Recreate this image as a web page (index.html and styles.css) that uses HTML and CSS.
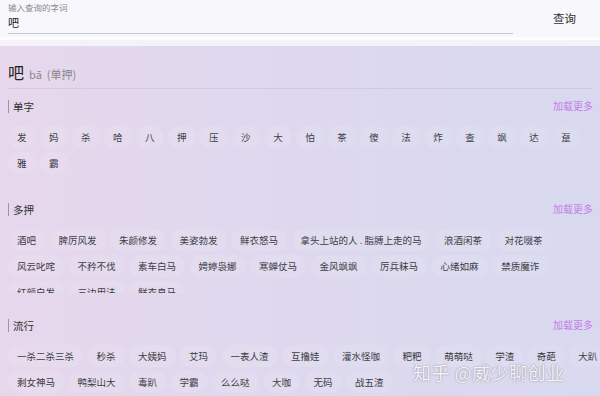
FILE: index.html
```html
<!DOCTYPE html>
<html lang="zh">
<head>
<meta charset="utf-8">
<title>押韵查询</title>
<link rel="stylesheet" href="styles.css">
</head>
<body>
<header class="top">
  <div class="field">
    <div class="field-label">输入查询的字词</div>
    <div class="field-value">吧</div>
  </div>
  <div class="search-btn">查询</div>
</header>
<main class="main">
  <div class="title">
    <span class="title-word">吧</span>
    <span class="title-pinyin">bā</span>
    <span class="title-type">(单押)</span>
  </div>

  <section class="section">
    <div class="section-head">
      <span class="section-name">单字</span>
      <span class="more">加载更多</span>
    </div>
    <div class="chips">
      <span class="chip">发</span><span class="chip">妈</span><span class="chip">杀</span><span class="chip">哈</span><span class="chip">八</span><span class="chip">押</span><span class="chip">压</span><span class="chip">沙</span><span class="chip">大</span><span class="chip">怕</span><span class="chip">茶</span><span class="chip">傻</span><span class="chip">法</span><span class="chip">炸</span><span class="chip">查</span><span class="chip">飒</span><span class="chip">达</span><span class="chip">趸</span><span class="chip">雅</span><span class="chip">霸</span>
    </div>
  </section>

  <section class="section section-clamped">
    <div class="section-head">
      <span class="section-name">多押</span>
      <span class="more">加载更多</span>
    </div>
    <div class="chips chips-clamp">
      <span class="chip">酒吧</span><span class="chip">脾厉风发</span><span class="chip">朱颜修发</span><span class="chip">美姿勃发</span><span class="chip">鲜衣怒马</span><span class="chip">拿头上站的人 . 脂膊上走的马</span><span class="chip">浪酒闲茶</span><span class="chip">对花啜茶</span><span class="chip">风云叱咤</span><span class="chip">不矜不伐</span><span class="chip">素车白马</span><span class="chip">娉婷袅娜</span><span class="chip">寒蝉仗马</span><span class="chip">金风飒飒</span><span class="chip">厉兵秣马</span><span class="chip">心绪如麻</span><span class="chip">禁质魔诈</span><span class="chip">红颜白发</span><span class="chip">三边用法</span><span class="chip">鲜衣良马</span>
    </div>
  </section>

  <section class="section">
    <div class="section-head">
      <span class="section-name">流行</span>
      <span class="more">加载更多</span>
    </div>
    <div class="chips">
      <span class="chip">一杀二杀三杀</span><span class="chip">秒杀</span><span class="chip">大姨妈</span><span class="chip">艾玛</span><span class="chip">一表人渣</span><span class="chip">互撸娃</span><span class="chip">灌水怪咖</span><span class="chip">粑粑</span><span class="chip">萌萌哒</span><span class="chip">学渣</span><span class="chip">奇葩</span><span class="chip">大趴</span><span class="chip">剩女神马</span><span class="chip">鸭梨山大</span><span class="chip">毒趴</span><span class="chip">学霸</span><span class="chip">么么哒</span><span class="chip">大咖</span><span class="chip">无码</span><span class="chip">战五渣</span>
    </div>
  </section>
</main>
<div class="watermark">知乎 @威少聊创业</div>
</body>
</html>
```

FILE: styles.css
```css
* { box-sizing: border-box; }

html, body {
  margin: 0;
  padding: 0;
}

body {
  width: 600px;
  height: 396px;
  overflow: hidden;
  position: relative;
  font-family: "Noto Sans CJK SC", "Noto Sans", sans-serif;
  color: #333;
  background: linear-gradient(90deg, #e7d7ec 0%, #dfd8ee 40%, #d8d9ef 100%);
}

.top {
  height: 46px;
  display: flex;
  align-items: flex-start;
  padding: 0 8px;
  background: linear-gradient(#f8f7fc 0, #f8f7fc 37px, #fdfcff 37px, #fdfcff 40px, #f4f3f9 40px);
}

.field {
  width: 505px;
  height: 34px;
  border-bottom: 1px solid #c6c5cc;
}

.field-label {
  font-size: 8.5px;
  line-height: 12px;
  color: #8a8a90;
  margin-top: 1px;
}

.field-value {
  font-size: 11px;
  line-height: 16px;
  color: #222;
  margin-top: 1px;
}

.search-btn {
  margin-left: 40px;
  margin-top: 10px;
  font-size: 11.5px;
  line-height: 16px;
  color: #333;
}

.main {
  padding: 0 8px;
}

.title {
  height: 43px;
  padding-top: 15px;
  border-bottom: 1px solid rgba(120, 110, 150, 0.12);
  display: flex;
  align-items: baseline;
}

.title-word {
  font-size: 16px;
  line-height: 22px;
  color: #222;
}

.title-pinyin {
  font-size: 11px;
  color: #888;
  margin-left: 5px;
}

.title-type {
  font-size: 11px;
  color: #888;
  margin-left: 5px;
}

.section {
  margin-top: 7px;
  margin-bottom: 25px;
}

.section + .section {
  margin-top: 0;
}

.section-clamped {
  margin-bottom: 22px;
}

.section-head {
  height: 20px;
  display: flex;
  align-items: center;
  justify-content: space-between;
}

.section-name {
  border-left: 1px solid #9a97a3;
  padding-left: 4px;
  font-size: 10.5px;
  line-height: 13px;
  color: #333;
}

.more {
  font-size: 10px;
  line-height: 14px;
  color: #c57fe6;
  margin-right: -1px;
}

.chips {
  margin-top: 10px;
  margin-right: -16px;
  display: flex;
  flex-wrap: wrap;
  gap: 4px 4.5px;
}

.chips-clamp {
  max-height: 64px;
  overflow: hidden;
}

.chip {
  height: 22px;
  line-height: 22px;
  padding: 0 9px;
  font-size: 9.5px;
  color: #3e3c46;
  white-space: nowrap;
  border-radius: 11px;
  background: rgba(255, 255, 255, 0.1);
}

.watermark {
  position: absolute;
  left: 413px;
  top: 360px;
  font-size: 18px;
  line-height: 24px;
  color: rgba(255, 255, 255, 0.92);
  text-shadow: 0 0 1px rgba(60, 60, 80, 0.45), 0 0 2px rgba(60, 60, 80, 0.25);
  letter-spacing: 0.5px;
}
```
